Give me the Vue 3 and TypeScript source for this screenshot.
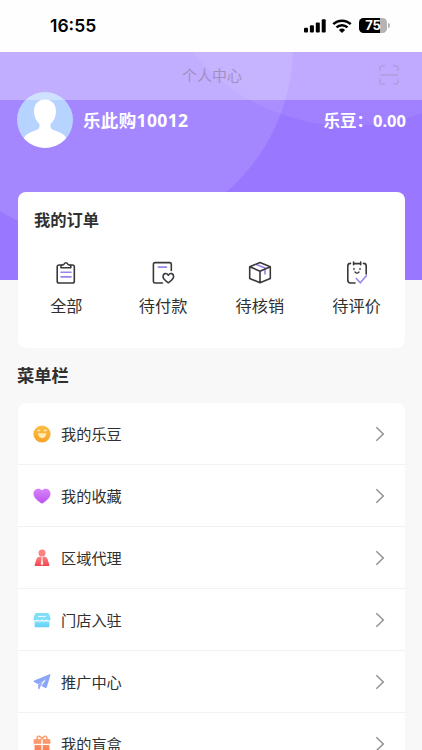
<script setup lang="ts">
type OrderIcon = 'all' | 'pay' | 'box' | 'review'
type MenuIcon = 'bean' | 'heart' | 'agent' | 'shop' | 'plane' | 'gift'

const userName: string = '乐此购10012'
const balance: string = '0.00'

const orders: { icon: OrderIcon; label: string }[] = [
  { icon: 'all', label: '全部' },
  { icon: 'pay', label: '待付款' },
  { icon: 'box', label: '待核销' },
  { icon: 'review', label: '待评价' },
]

const menu: { icon: MenuIcon; label: string }[] = [
  { icon: 'bean', label: '我的乐豆' },
  { icon: 'heart', label: '我的收藏' },
  { icon: 'agent', label: '区域代理' },
  { icon: 'shop', label: '门店入驻' },
  { icon: 'plane', label: '推广中心' },
  { icon: 'gift', label: '我的盲盒' },
]
</script>

<template>
  <div class="page">
    <header class="status">
      <span class="time">16:55</span>
      <div class="indicators">
        <svg class="signal" viewBox="0 0 22 14">
          <rect x="0" y="8.7" width="4" height="4.8" rx="1" />
          <rect x="5.9" y="6.3" width="4" height="7.2" rx="1" />
          <rect x="11.8" y="3.4" width="4" height="10.1" rx="1" />
          <rect x="17.7" y="0.3" width="4" height="13.2" rx="1" />
        </svg>
        <svg class="wifi" viewBox="0 0 20 14">
          <path d="M1.3 5.2a12.4 12.4 0 0 1 17.4 0M4.5 8.4a7.9 7.9 0 0 1 11 0" fill="none" stroke="#000" stroke-width="2.5" />
          <path d="M6.9 10.9a4.5 4.5 0 0 1 6.2 0L10 14z" />
        </svg>
        <div class="battery"><span>75</span></div>
        <i class="battery-tip"></i>
      </div>
    </header>

    <section class="hero">
      <nav class="navbar">
        <h1>个人中心</h1>
        <svg class="scan" viewBox="0 0 20 20">
          <path d="M1 6V2.2Q1 1 2.2 1H6M14 1h3.800Q19 1 19 2.200V6M19 14v3.800Q19 19 17.800 19H14M6 19H2.200Q1 19 1 17.800V14M1 10h18" />
        </svg>
      </nav>
      <div class="user">
        <svg class="avatar" viewBox="0 0 56 56">
          <defs><clipPath id="avatar-clip"><circle cx="28" cy="28" r="28" /></clipPath></defs>
          <g clip-path="url(#avatar-clip)">
            <rect width="56" height="56" fill="#b7d3ff" />
            <path d="M28 7.500c7 0 11.200 5 11 12.500-.2 5.500-2.600 9.500-5.500 12v2.500c0 2 1.500 3 4.500 4 5.500 1.700 9 4 11.500 7.500V57h-43V46c2.500-3.500 6-5.800 11.500-7.500 3-1 4.500-2 4.500-4V32c-2.900-2.500-5.300-6.500-5.500-12C16.800 12.500 21 7.500 28 7.500z" fill="#fff" />
          </g>
        </svg>
        <span class="name">{{ userName }}</span>
        <span class="balance">乐豆：{{ balance }}</span>
      </div>
    </section>

    <section class="orders">
      <h2>我的订单</h2>
      <div class="order-grid">
        <div v-for="o in orders" :key="o.icon" class="order">
          <svg class="order-icon" viewBox="0 0 24 24">
            <template v-if="o.icon === 'all'">
              <path d="M7.500 4H5Q3.200 4 3.200 5.800V20.200Q3.200 22 5 22H18.500Q20.300 22 20.300 20.200V5.800Q20.300 4 18.500 4H16.500" />
              <path d="M7 6.800V4.600L9.800 3.400Q12 .2 14 3.400L16.800 4.600V6.800z" />
              <path class="accent" d="M7 11.300h10M7 15.900h10" />
            </template>
            <template v-else-if="o.icon === 'pay'">
              <path d="M11.500 22H4Q2.400 22 2.400 20.400V3.200Q2.400 1.600 4 1.600H18.700Q20.300 1.600 20.300 3.200V9.500" />
              <path class="accent" d="M7.300 6.100h8.200" />
              <path d="M17.300 14.200C15.200 11.300 12 12.500 12 15.500C12 18 15.200 20.400 17.300 21.800C19.400 20.400 22.600 18 22.600 15.500C22.600 12.500 19.400 11.300 17.300 14.200z" />
            </template>
            <template v-else-if="o.icon === 'box'">
              <path class="accent" d="M8.300 3.400L17 7V13" />
              <path d="M12 1.500L22.300 5.800V17.400L12 21.800L1.700 17.400V5.800zM1.700 5.800L12 10.200L22.300 5.800M12 10.200V21.800" />
            </template>
            <template v-else>
              <path d="M5.500 2.400Q2.800 2.400 2.800 5V19Q2.800 22 5.600 22H10M18.500 2.400Q21.200 2.400 21.200 5V13M8.600 1V3.800M15.700 1V3.800M8.600 2.600H15.700" />
              <path class="thin" d="M9 7.300v1.200M15 7.300v1.200M10 11Q12 13.300 14 11" />
              <path class="accent" d="M11.300 17.500L15.300 21.800L21.300 14.800" />
            </template>
          </svg>
          <span>{{ o.label }}</span>
        </div>
      </div>
    </section>

    <h2 class="menu-title">菜单栏</h2>
    <ul class="menu">
      <li v-for="m in menu" :key="m.icon">
        <svg class="menu-icon" viewBox="0 0 18 18">
          <template v-if="m.icon === 'bean'">
            <defs><linearGradient id="g-bean" x2="0" y2="1"><stop stop-color="#fbbf42" /><stop offset="1" stop-color="#f9a329" /></linearGradient></defs>
            <circle cx="9" cy="9" r="8.600" fill="url(#g-bean)" />
            <path d="M5 8.300H13.300Q12.900 13 9.200 13Q5.400 13 5 8.300z" fill="#ffecb9" />
            <path d="M4.500 6.300Q5.800 4 7 6.300M11 6.300Q12.200 4 13.500 6.300" fill="none" stroke="#ffecb9" stroke-width="1.300" />
          </template>
          <template v-else-if="m.icon === 'heart'">
            <defs><linearGradient id="g-heart" x2="0" y2="1"><stop stop-color="#d783fa" /><stop offset="1" stop-color="#bd52ef" /></linearGradient></defs>
            <path d="M9 3.300C6.500.3.500 1.600.5 6.900C.5 11 5.500 14 8.200 16.200Q9 16.800 9.800 16.200C12.500 14 17.500 11 17.500 6.900C17.500 1.600 11.500.3 9 3.300z" fill="url(#g-heart)" />
          </template>
          <template v-else-if="m.icon === 'agent'">
            <defs><linearGradient id="g-agent" x2="0" y2="1"><stop stop-color="#fa8280" /><stop offset="1" stop-color="#ef454e" /></linearGradient></defs>
            <circle cx="9" cy="4.100" r="3.500" fill="#fa8280" />
            <path d="M6 7.700H12Q14 8 14.700 10.500L16.300 15.800Q16.600 17 15.300 17H2.700Q1.400 17 1.700 15.800L3.300 10.500Q4 8 6 7.700z" fill="url(#g-agent)" />
            <path d="M8.200 8h1.600l-.3 1.500.8 5.400L9 16.500l-1.300-1.600.8-5.400z" fill="#ffe5e3" />
          </template>
          <template v-else-if="m.icon === 'shop'">
            <defs><linearGradient id="g-shop" x2="0" y2="1"><stop stop-color="#87e3fa" /><stop offset="1" stop-color="#5dd0f6" /></linearGradient></defs>
            <path d="M3.500 2H14.500Q15.600 2 16 3L17.400 6.700Q18 9.600 15.800 9.600Q14.300 9.600 13.600 8.600Q12.700 9.600 11.200 9.600Q9.800 9.600 9 8.600Q8.200 9.600 6.800 9.600Q5.300 9.600 4.400 8.600Q3.700 9.600 2.200 9.600Q0 9.600.6 6.700L2 3Q2.400 2 3.500 2z" fill="#80def9" />
            <path d="M1.600 10.500Q3.400 10.700 4.400 9.900Q6.700 11.300 9 9.900Q11.300 11.300 13.600 9.900Q14.600 10.700 16.400 10.500V15Q16.400 16.300 15.100 16.300H2.900Q1.600 16.300 1.600 15z" fill="url(#g-shop)" />
            <path d="M5 5.500h8" stroke="#e2faff" stroke-width="1.200" />
          </template>
          <template v-else-if="m.icon === 'plane'">
            <path d="M16.600 1.200Q17.800 1 17.400 2.200L13.800 14.300Q13.500 15.300 12.500 14.900L8.400 12.900L13.200 6.200L5.300 11.200L1 9Q0 8.200 1.200 7.500z" fill="#8ba5f7" />
            <path d="M5.100 11.700L10.200 8.200L7.700 12.900L6.400 16Q5.200 17 5.200 15.500z" fill="#95a7f8" />
          </template>
          <template v-else>
            <defs><linearGradient id="g-gift" x2="0" y2="1"><stop stop-color="#fba276" /><stop offset="1" stop-color="#f8774c" /></linearGradient></defs>
            <path d="M9 4.500C7.500 0 3 .5 4.300 4.300M9 4.500C10.500 0 15 .5 13.700 4.300" fill="none" stroke="#fba276" stroke-width="1.500" />
            <path d="M2 4h6.300v4.800H.6V5.400Q.6 4 2 4zM9.700 4H16q1.400 0 1.400 1.400v3.400H9.700zM1.600 10h6.700v7.300H3q-1.400 0-1.400-1.400zM9.700 10h6.700v5.900q0 1.400-1.400 1.400H9.700z" fill="url(#g-gift)" />
          </template>
        </svg>
        <span class="menu-label">{{ m.label }}</span>
        <svg class="chevron" viewBox="0 0 10 16"><path d="M1.300 1.300L8.300 8L1.300 14.700" /></svg>
      </li>
    </ul>
  </div>
</template>

<style>
body {
  background: #f8f8f8;
}
</style>

<style scoped>
.page {
  height: 750px;
  overflow: hidden;
  background: #f8f8f8;
  color: #303030;
  font-family: "Noto Sans", "Noto Sans CJK SC", sans-serif;
}
h1,
h2,
ul {
  margin: 0;
  padding: 0;
}
.status {
  box-sizing: border-box;
  height: 52px;
  padding: 0 32px 0 50px;
  display: flex;
  align-items: center;
  justify-content: space-between;
  background: #fefefe;
}
.time {
  color: #000;
  font: 600 17.5px/20px Inter, sans-serif;
}
.indicators {
  display: flex;
  align-items: center;
  margin-top: -1px;
}
.signal {
  width: 22px;
  height: 14px;
}
.wifi {
  width: 20px;
  height: 14px;
  margin-left: 6px;
}
.battery {
  width: 28px;
  height: 15px;
  margin-left: 7px;
  border-radius: 4.5px;
  background: linear-gradient(90deg, #000 75%, #b4b4b4 75%);
  color: #fff;
  font: 700 13px/15px Inter, sans-serif;
  text-align: center;
}
.battery-tip {
  width: 2px;
  height: 5px;
  margin-left: 1px;
  border-radius: 0 2px 2px 0;
  background: #b4b4b4;
}
.hero {
  height: 228px;
  background:
    radial-gradient(circle at 100px -6px, rgba(255, 255, 255, 0.11) 192.5px, transparent 193.5px),
    radial-gradient(circle at 350px -132px, rgba(255, 255, 255, 0.07) 205.5px, transparent 206.5px),
    #9977ff;
}
.navbar {
  position: relative;
  z-index: 1;
  box-sizing: border-box;
  height: 48px;
  padding: 0 21px 2px 23px;
  display: grid;
  grid-template-columns: 22px 1fr 22px;
  align-items: center;
  background: rgba(255, 255, 255, 0.33);
}
.navbar h1 {
  grid-column: 2;
  color: #a18fc4;
  font-size: 15px;
  font-weight: 400;
  line-height: 22px;
  text-align: center;
}
.scan {
  width: 20px;
  height: 20px;
  fill: none;
  stroke: #a795cc;
  stroke-width: 1;
}
.user {
  display: flex;
  align-items: center;
  height: 56px;
  margin-top: -8px;
  padding: 0 16px 0 17px;
  color: #fff;
  font-weight: 700;
}
.avatar {
  width: 56px;
  height: 56px;
}
.name {
  margin-left: 10px;
  padding-bottom: 1px;
  font-size: 17.5px;
  letter-spacing: 0.35px;
}
.balance {
  margin-left: auto;
  font-size: 16.5px;
}
.orders {
  position: relative;
  box-sizing: border-box;
  height: 156px;
  margin: -88px 17px 0 18px;
  padding-top: 15px;
  border-radius: 8px;
  background: #fff;
}
.orders h2 {
  padding-left: 16px;
  font-size: 16.3px;
  line-height: 26px;
}
.order-grid {
  display: grid;
  grid-template-columns: repeat(4, 1fr);
  margin-top: 28px;
}
.order {
  display: flex;
  flex-direction: column;
  align-items: center;
  font-size: 16.2px;
  line-height: 24px;
}
.order-icon {
  width: 24px;
  height: 24px;
  margin-bottom: 9px;
  fill: none;
  stroke: #3a383d;
  stroke-width: 1.6;
  stroke-linejoin: round;
  stroke-linecap: round;
}
.order-icon .accent {
  stroke: #9a82ee;
}
.order-icon .thin {
  stroke-width: 1.3;
}
.menu-title {
  padding-left: 17px;
  margin-top: 15px;
  font-size: 17.3px;
  line-height: 26px;
}
.menu {
  margin: 14px 17px 0 18px;
  border-radius: 8px;
  background: #fff;
  list-style: none;
}
.menu li {
  box-sizing: border-box;
  height: 62px;
  padding: 0 20px 0 15px;
  display: flex;
  align-items: center;
  border-bottom: 1px solid #f2f2f2;
  font-size: 15.2px;
}
.menu-icon {
  width: 18px;
  height: 18px;
  margin-right: 10px;
}
.menu-label {
  line-height: 22px;
}
.chevron {
  width: 10px;
  height: 16px;
  margin-left: auto;
  fill: none;
  stroke: #929292;
  stroke-width: 1.5;
}
</style>
